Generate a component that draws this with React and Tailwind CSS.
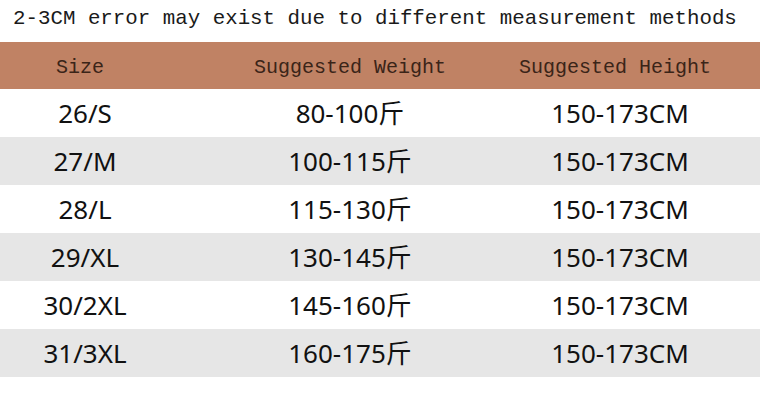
const rows = [
  ["26/S", "80-100斤", "150-173CM"],
  ["27/M", "100-115斤", "150-173CM"],
  ["28/L", "115-130斤", "150-173CM"],
  ["29/XL", "130-145斤", "150-173CM"],
  ["30/2XL", "145-160斤", "150-173CM"],
  ["31/3XL", "160-175斤", "150-173CM"],
];

export default function App() {
  return (
    <div className="w-[760px] h-[400px] bg-white overflow-hidden">
      {/* note above the table */}
      <div className="h-[42px] pt-[5px] pl-[13px] text-[20.8px] leading-[28px] text-[#1a1a1a] font-['Liberation_Mono',monospace] whitespace-nowrap">
        2-3CM error may exist due to different measurement methods
      </div>

      <div className="grid grid-cols-[160px_380px_150px] h-[47px] bg-[#c08264] items-center pt-[4px] text-[20px] text-[#3a2418] font-['Liberation_Mono',monospace]">
        <div className="text-center">Size</div>
        <div className="text-center">Suggested Weight</div>
        <div className="flex justify-center whitespace-nowrap">
          <span>Suggested Height</span>
        </div>
      </div>

      {rows.map((r, i) => (
        <div
          key={r[0]}
          className={
            "grid grid-cols-[170px_360px_180px] h-[48px] items-center pt-[1px] text-[26px] text-[#111] font-['Noto_Sans','Noto_Sans_CJK_SC',sans-serif] " +
            (i % 2 === 1 ? "bg-[#e6e6e6]" : "bg-white")
          }
        >
          <div className="text-center">{r[0]}</div>
          <div className="text-center">{r[1]}</div>
          <div className="text-center">{r[2]}</div>
        </div>
      ))}
    </div>
  );
}
